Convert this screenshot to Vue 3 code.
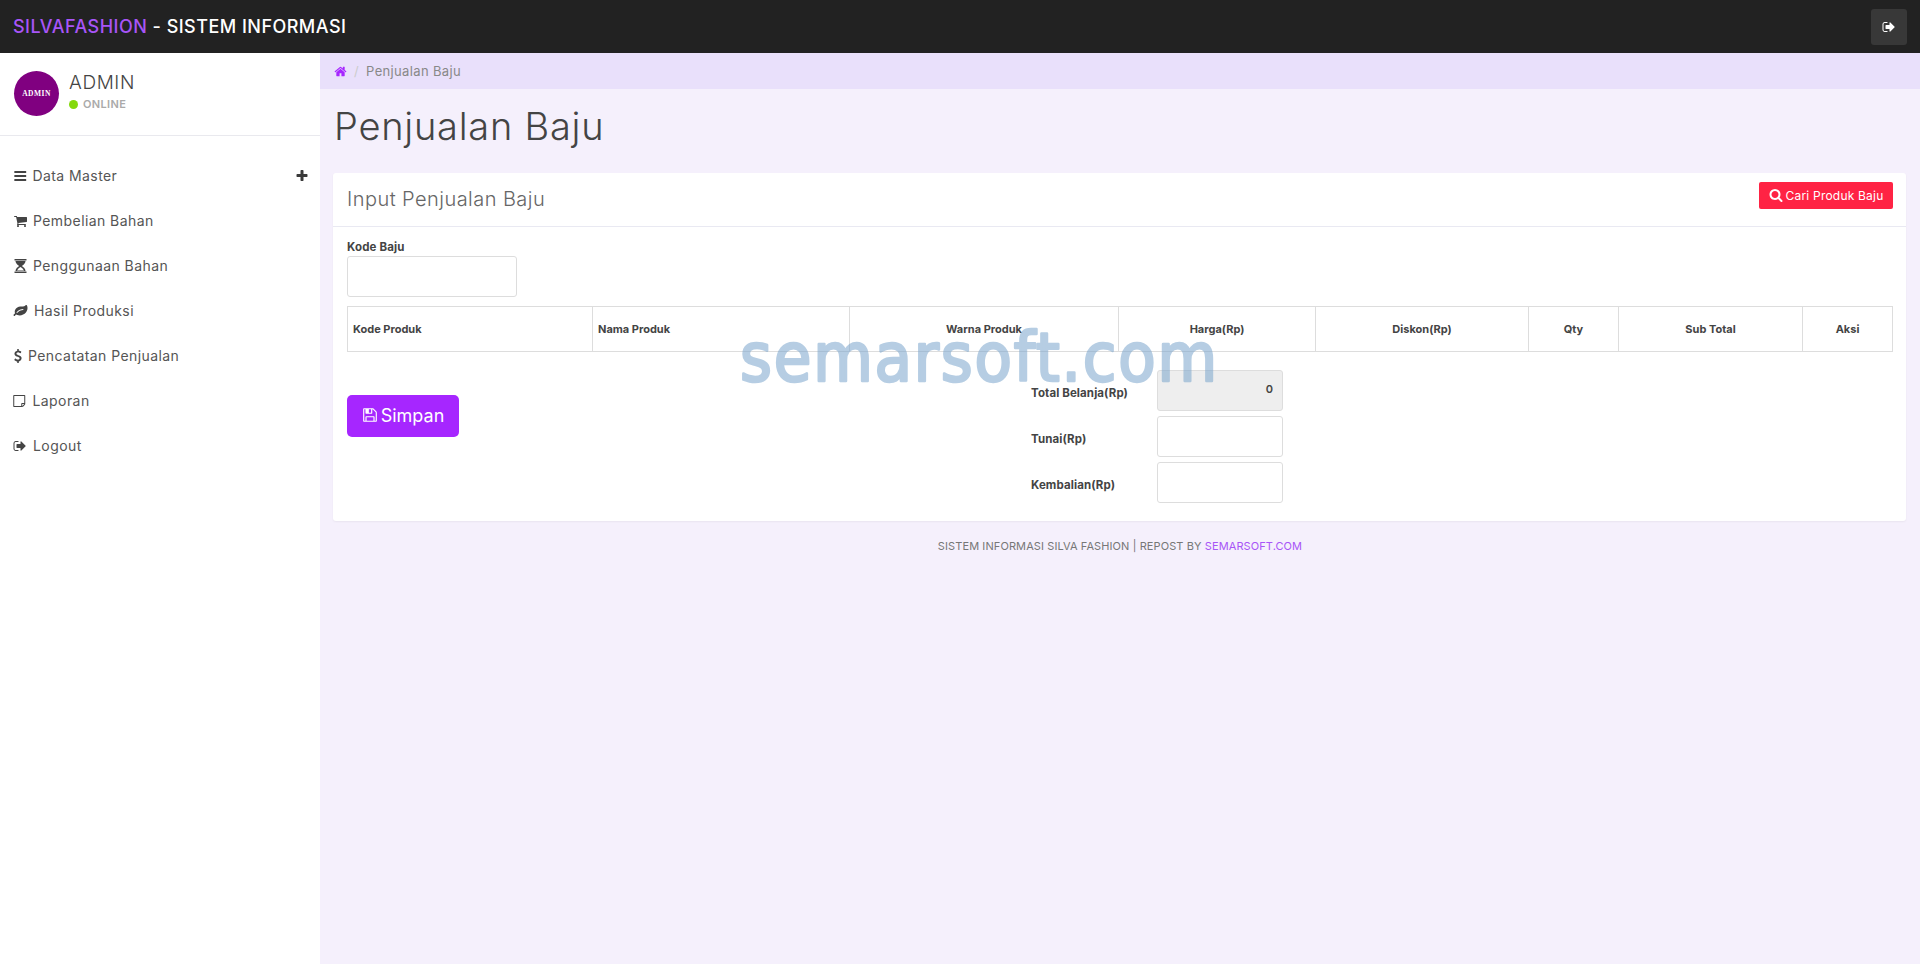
<template>
  <div class="page">
    <header class="topbar">
      <div class="brand"><span class="brand-name">SILVAFASHION</span> - SISTEM INFORMASI</div>
      <button class="top-logout">
        <svg class="icon" viewBox="0 0 1792 1792"><path :d="icons.signOut" /></svg>
      </button>
    </header>

    <div class="layout">
      <aside class="sidebar">
        <div class="user-box">
          <div class="avatar">ADMIN</div>
          <div>
            <div class="user-name">ADMIN</div>
            <div class="user-status"><span class="dot"></span>ONLINE</div>
          </div>
        </div>

        <nav class="menu">
          <a v-for="item in menu" :key="item.label" class="menu-item" href="#">
            <svg
              class="icon"
              :style="{ width: item.size + 'px', marginRight: (item.extra || 0) + 'px' }"
              :viewBox="item.box || '0 0 1792 1792'"
            ><path fill-rule="evenodd" :d="icons[item.icon]" /></svg>
            <span>{{ item.label }}</span>
            <svg v-if="item.sub" class="icon plus" viewBox="0 0 1792 1792"><path :d="icons.plus" /></svg>
          </a>
        </nav>
      </aside>

      <main class="content">
        <div class="breadcrumb">
          <svg class="icon home" viewBox="0 0 1792 1792"><path :d="icons.home" /></svg>
          <span class="sep">/</span>
          <span>Penjualan Baju</span>
        </div>

        <h1 class="page-title">Penjualan Baju</h1>

        <section class="card">
          <div class="card-header">
            <h2>Input Penjualan Baju</h2>
            <button class="search-button">
              <svg class="icon" viewBox="0 0 1792 1792"><path :d="icons.search" /></svg>
              Cari Produk Baju
            </button>
          </div>

          <div class="card-body">
            <label class="code-label">Kode Baju</label>
            <input class="code-input" type="text" />

            <table class="items">
              <colgroup>
                <col v-for="col in columns" :key="col.label" :style="{ width: col.width + 'px' }" />
              </colgroup>
              <thead>
                <tr>
                  <th v-for="col in columns" :key="col.label" :class="{ left: col.left }">{{ col.label }}</th>
                </tr>
              </thead>
            </table>

            <div class="bottom-row">
              <div>
                <button class="save-button">
                  <svg class="icon" viewBox="0 0 1792 1792"><path :d="icons.save" /></svg>
                  Simpan
                </button>
              </div>

              <div class="totals">
                <label>Total Belanja(Rp)</label>
                <input class="readonly" type="text" value="0" readonly />
                <label>Tunai(Rp)</label>
                <input type="text" />
                <label>Kembalian(Rp)</label>
                <input type="text" />
              </div>
            </div>
          </div>
        </section>

        <footer class="footer">
          SISTEM INFORMASI SILVA FASHION | REPOST BY <a href="#">SEMARSOFT.COM</a>
        </footer>
      </main>
    </div>

    <!-- watermark over the page, not part of the layout -->
    <svg class="watermark" width="530" height="90" viewBox="0 0 530 90">
      <text x="4" y="60">semarsoft.com</text>
    </svg>
  </div>
</template>

<script setup>
// Font Awesome 4 glyphs, 1792 grid
const icons = {
  bars: 'M1664 1344v128q0 26-19 45t-45 19h-1408q-26 0-45-19t-19-45v-128q0-26 19-45t45-19h1408q26 0 45 19t19 45zm0-512v128q0 26-19 45t-45 19h-1408q-26 0-45-19t-19-45v-128q0-26 19-45t45-19h1408q26 0 45 19t19 45zm0-512v128q0 26-19 45t-45 19h-1408q-26 0-45-19t-19-45v-128q0-26 19-45t45-19h1408q26 0 45 19t19 45z',
  cart: 'M704 1536q0 52-38 90t-90 38-90-38-38-90 38-90 90-38 90 38 38 90zm896 0q0 52-38 90t-90 38-90-38-38-90 38-90 90-38 90 38 38 90zm128-1088v512q0 24-16.5 42.5t-40.5 21.5l-1044 122q13 60 13 70 0 16-24 64h920q26 0 45 19t19 45-19 45-45 19h-1024q-26 0-45-19t-19-45q0-11 8-31.5t16-36 21.5-40 15.5-29.5l-177-823h-204q-26 0-45-19t-19-45 19-45 45-19h256q16 0 28.5 6.5t19.5 15.5 13 24.5 8 26 5.5 29.5 4.5 26h1201q26 0 45 19t19 45z',
  // same shape as fa-hourglass-start: sand on top, the lower half left open
  hourglass: 'M1632 1600q14 0 23 9t9 23v128q0 14-9 23t-23 9h-1472q-14 0-23-9t-9-23v-128q0-14 9-23t23-9h1472zm-1374-64q3-55 16-107t30-95 46-87 53.500-76 64.500-69.500 66-60 70.500-55 66.500-47.500 65-43q-43-28-65-43t-66.500-47.500-70.500-55-66-60-64.500-69.500-53.500-76-46-87-30-95-16-107h1276q-3 55-16 107t-30 95-46 87-53.500 76-64.500 69.500-66 60-70.500 55-66.500 47.500-65 43q43 28 65 43t66.500 47.500 70.500 55 66 60 64.500 69.500 53.500 76 46 87 30 95 16 107h-1276zm1374-1536q14 0 23 9t9 23v128q0 14-9 23t-23 9h-1472q-14 0-23-9t-9-23v-128q0-14 9-23t23-9h1472zM896 1010L1130 1190 1300 1400 1350 1470H442L492 1400 662 1190z',
  leaf: 'M1280 704q0-26-19-45t-45-19q-172 0-318 49.500t-259.500 134-235.500 219.500q-19 21-19 45 0 26 19 45t45 19q24 0 45-19 27-24 74-71t67-66q137-124 268.500-176t313.500-52q26 0 45-19t19-45zm512-198q0 95-20 193-46 224-184.500 383t-357.500 268q-214 108-438 108-148 0-286-47-15-5-88-42t-96-37q-16 0-39.500 32t-45 70-52.500 70-60 32q-30 0-51-11t-31-24-27-42q-2-4-6-11t-5.500-10-3-9.500-1.500-13.500q0-35 31-73.500t68-65.500 68-56 31-48q0-4-14-38t-16-44q-9-51-9-104 0-115 43.500-220t119-184.500 170.500-139 204-95.500q55-18 145-25.500t179.500-9 178.500-6 163.500-24 113.500-56.500l29.500-29.500 29.500-28 27-20 36.500-16 43.500-4.500q39 0 70.500 46t47.500 112 24 124 8 96z',
  dollar: 'M1362 1185q0 153-99.500 263.500t-258.500 136.500v175q0 14-9 23t-23 9h-135q-13 0-22.500-9.500t-9.500-22.500v-175q-66-9-127.500-31t-101.500-44.500-74-48-46.500-37.500-17.500-18q-17-21-2-41l103-135q7-10 23-12 15-2 24 9l2 2q113 99 243 125 37 8 74 8 81 0 142.500-43t61.500-122q0-28-15-53t-33.500-42-58.500-37.500-66-32-80-32.500q-39-16-61.500-25t-61.500-26.500-62.500-31-56.500-35.500-53.500-42.500-43.500-49-35.500-58-21-66.500-8.500-78q0-138 98-242t255-134v-180q0-13 9.500-22.500t22.500-9.500h135q14 0 23 9t9 23v176q57 6 110.500 23t87 33.500 63.500 37.500 39 29 15 14q17 18 5 38l-81 146q-8 15-23 16-14 3-27-7-3-3-14.500-12t-39-26.500-58.500-32-74.500-26-85.500-11.500q-95 0-155 43t-60 111q0 26 8.500 48t29.500 41.500 39.500 33 56 31 60.500 27 70 27.500q53 20 81 31.500t76 35 75.500 42.500 62 50 53 63.500 31.500 76.500 13 94z',
  note: 'M1400 1280h-248v248q29-10 41-22l185-185q12-12 22-41zm-280-128h288v-896h-1280v1280h896v-288q0-40 28-68t68-28zm416-928v1024q0 40-20 88t-48 76l-184 184q-28 28-76 48t-88 20h-1024q-40 0-68-28t-28-68v-1344q0-40 28-68t68-28h1344q40 0 68 28t28 68z',
  signOut: 'M704 1440q0 4 1 20t.5 26.500-3 23.500-10 19.500-20.500 6.500h-320q-119 0-203.500-84.500t-84.500-203.500v-704q0-119 84.500-203.500t203.500-84.500h320q13 0 22.500 9.500t9.500 22.500q0 4 1 20t.5 26.500-3 23.500-10 19.500-20.500 6.500h-320q-66 0-113 47t-47 113v704q0 66 47 113t113 47h312l11.500 1 11.500 3 8 5.500 7 9 2 13.500zm928-544q0 26-19 45l-544 544q-19 19-45 19t-45-19-19-45v-288h-448q-26 0-45-19t-19-45v-384q0-26 19-45t45-19h448v-288q0-26 19-45t45-19 45 19l544 544q19 19 19 45z',
  plus: 'M1600 736v192q0 40-28 68t-68 28h-416v416q0 40-28 68t-68 28h-192q-40 0-68-28t-28-68v-416h-416q-40 0-68-28t-28-68v-192q0-40 28-68t68-28h416v-416q0-40 28-68t68-28h192q40 0 68 28t28 68v416h416q40 0 68 28t28 68z',
  home: 'M1472 992v480q0 26-19 45t-45 19h-384v-384h-256v384h-384q-26 0-45-19t-19-45v-480q0-1 .5-3t.5-3l575-474 575 474q1 2 1 6zm223-69l-62 74q-8 9-21 11h-3q-13 0-21-7l-692-577-692 577q-12 8-24 7-13-2-21-11l-62-74q-8-10-7-23.500t11-21.500l719-599q32-26 76-26t76 26l244 204v-195q0-14 9-23t23-9h192q14 0 23 9t9 23v408l219 182q10 8 11 21.500t-7 23.500z',
  save: 'M512 1536h768v-384h-768v384zm896 0h128v-896q0-14-10-38.500t-20-34.500l-281-281q-10-10-34-20t-39-10v416q0 40-28 68t-68 28h-576q-40 0-68-28t-28-68v-416h-128v1280h128v-416q0-40 28-68t68-28h832q40 0 68 28t28 68v416zm-384-928v-320q0-13-9.500-22.500t-22.500-9.500h-192q-13 0-22.500 9.500t-9.500 22.500v320q0 13 9.500 22.500t22.500 9.500h192q13 0 22.500-9.500t9.500-22.500zm640 32v928q0 40-28 68t-68 28h-1344q-40 0-68-28t-28-68v-1344q0-40 28-68t68-28h928q40 0 88 20t76 48l280 280q28 28 48 76t20 88z',
  search: 'M1216 832q0-185-131.500-316.500t-316.500-131.500-316.500 131.500-131.500 316.500 131.500 316.500 316.500 131.500 316.500-131.500 131.500-316.500zm512 832q0 52-38 90t-90 38q-54 0-90-38l-343-342q-179 124-399 124-143 0-273.500-55.500t-225-150-150-225-55.500-273.500 55.500-273.500 150-225 225-150 273.500-55.500 273.500 55.500 225 150 150 225 55.500 273.500q0 220-124 399l343 343q37 37 37 90z',
}

const menu = [
  { label: 'Data Master', icon: 'bars', size: 14.5, sub: true },
  { label: 'Pembelian Bahan', icon: 'cart', size: 15 },
  { label: 'Penggunaan Bahan', icon: 'hourglass', size: 15 },
  { label: 'Hasil Produksi', icon: 'leaf', size: 15, extra: 1 },
  { label: 'Pencatatan Penjualan', icon: 'dollar', size: 9, box: '288 0 1104 1792', extra: 1 },
  { label: 'Laporan', icon: 'note', size: 14.5 },
  { label: 'Logout', icon: 'signOut', size: 14, extra: 1 },
]

const columns = [
  { label: 'Kode Produk', width: 245, left: true },
  { label: 'Nama Produk', width: 257, left: true },
  { label: 'Warna Produk', width: 269 },
  { label: 'Harga(Rp)', width: 197 },
  { label: 'Diskon(Rp)', width: 213 },
  { label: 'Qty', width: 90 },
  { label: 'Sub Total', width: 184 },
  { label: 'Aksi', width: 90 },
]
</script>

<style>
html,
body {
  margin: 0;
}
</style>

<style scoped>
.page {
  position: relative;
  height: 964px;
  overflow: hidden;
  display: flex;
  flex-direction: column;
  font-family: Inter, "Liberation Sans", sans-serif;
  color: #444;
}

.icon {
  width: 14px;
  height: 14px;
  fill: currentColor;
  flex-shrink: 0;
}

.topbar {
  height: 53px;
  padding: 0 13px;
  background: #222;
  display: flex;
  align-items: center;
  justify-content: space-between;
  box-sizing: border-box;
}

.brand {
  color: #fff;
  font-size: 18px;
  font-weight: 500;
  letter-spacing: 0.47px;
}

.brand-name {
  color: #a855f7;
}

.top-logout {
  width: 36px;
  height: 36px;
  border: none;
  border-radius: 3px;
  background: #383838;
  color: #fff;
  display: flex;
  align-items: center;
  justify-content: center;
  padding: 0;
}

.top-logout .icon {
  width: 14px;
  height: 14px;
}

.layout {
  flex: 1;
  display: flex;
  min-height: 0;
}

.sidebar {
  width: 320px;
  flex-shrink: 0;
  background: #fff;
}

.user-box {
  height: 83px;
  padding: 18px 14px 0;
  border-bottom: 1px solid #e9e9ee;
  display: flex;
  gap: 10px;
  box-sizing: border-box;
}

.avatar {
  width: 45px;
  height: 45px;
  border-radius: 50%;
  background: #800080;
  color: #fff;
  font-family: "Liberation Serif", serif;
  font-size: 7.5px;
  font-weight: 700;
  letter-spacing: 0.5px;
  display: flex;
  align-items: center;
  justify-content: center;
}

.user-name {
  font-size: 19px;
  font-weight: 300;
  line-height: 24px;
  letter-spacing: 0.6px;
  color: #444;
}

.user-status {
  margin-top: 2px;
  display: flex;
  align-items: center;
  gap: 5px;
  font-size: 11px;
  font-weight: 600;
  letter-spacing: 0.35px;
  color: #aaa;
}

.dot {
  width: 9px;
  height: 9px;
  border-radius: 50%;
  background: #84d90d;
}

.menu {
  padding-top: 17px;
  display: flex;
  flex-direction: column;
}

.menu-item {
  height: 45px;
  padding: 0 13px;
  display: flex;
  align-items: center;
  gap: 5px;
  font-size: 14px;
  letter-spacing: 0.42px;
  color: #555;
  text-decoration: none;
}

.menu-item .icon {
  color: #444;
}

.menu-item .plus {
  width: 14px;
  height: 14px;
  margin-left: auto;
  margin-right: -2px;
  color: #3a3a3a;
}

.content {
  flex: 1;
  min-width: 0;
  background: #f5f0fc;
}

.breadcrumb {
  height: 36px;
  padding: 0 14px;
  background: #e9e0fb;
  display: flex;
  align-items: center;
  gap: 6px;
  font-size: 13px;
  letter-spacing: 0.35px;
  color: #888;
}

.home {
  width: 13px;
  height: 13px;
  color: #a626ff;
}

.sep {
  color: #ccc;
  margin: 0 1px;
}

.page-title {
  margin: 0 0 16px;
  padding: 15px 14px 0;
  height: 68px;
  box-sizing: border-box;
  font-size: 38px;
  line-height: 44px;
  font-weight: 300;
  letter-spacing: 0.75px;
  color: #444;
}

.card {
  margin: 0 14px 0 13px;
  background: #fff;
  border-radius: 3px;
  box-shadow: 0 1px 2px rgba(0, 0, 0, 0.05);
}

.card-header {
  height: 54px;
  padding: 0 13px 0 14px;
  border-bottom: 1px solid #e9e9f2;
  display: flex;
  align-items: center;
  justify-content: space-between;
  box-sizing: border-box;
}

.card-header h2 {
  margin: 0 0 2px;
  font-size: 20px;
  font-weight: 300;
  letter-spacing: 0.45px;
  color: #666;
}

.search-button {
  width: 134px;
  height: 27px;
  margin-top: -9px;
  padding: 0;
  border: none;
  border-radius: 2px;
  background: #ff2344;
  color: #fff;
  font-family: inherit;
  font-size: 12px;
  letter-spacing: 0.2px;
  display: flex;
  align-items: center;
  justify-content: center;
  gap: 3px;
}

.search-button .icon {
  width: 14px;
  height: 14px;
}

.card-body {
  padding: 11px 13px 18px 14px;
}

.code-label {
  display: block;
  height: 16px;
  margin-bottom: 2px;
  font-size: 11.5px;
  line-height: 19px;
  font-weight: 700;
  letter-spacing: 0.15px;
  color: #444;
}

input {
  display: block;
  height: 41px;
  padding: 0 9px;
  border: 1px solid #ddd;
  border-radius: 3px;
  background: #fff;
  box-sizing: border-box;
  font-family: inherit;
  font-size: 11px;
  font-weight: 600;
  color: #444;
}

.code-input {
  width: 170px;
}

.items {
  width: 1545px;
  height: 46px;
  margin-top: 9px;
  border-collapse: collapse;
  table-layout: fixed;
}

.items th {
  padding: 5px;
  border: 1px solid #ddd;
  font-size: 11px;
  font-weight: 700;
  text-align: center;
  color: #444;
}

.items th.left {
  text-align: left;
}

.bottom-row {
  display: flex;
  margin-top: 18px;
}

.bottom-row > div:first-child {
  width: 684px;
  padding-top: 25px;
}

.save-button {
  width: 112px;
  height: 42px;
  padding: 0 0 2px;
  border: none;
  border-radius: 5px;
  background: #a626ff;
  color: #fff;
  font-family: inherit;
  font-size: 18px;
  display: flex;
  align-items: center;
  justify-content: center;
  gap: 3px;
}

.save-button .icon {
  width: 16px;
  height: 16px;
}

.totals {
  display: grid;
  grid-template-columns: 126px 126px;
  row-gap: 5px;
  align-items: center;
  font-size: 11.5px;
  font-weight: 700;
  letter-spacing: 0.1px;
  color: #444;
}

.totals label {
  padding-top: 4px;
}

.totals input {
  width: 126px;
}

.readonly {
  background: #eee;
  text-align: right;
  padding-bottom: 4px;
}

.footer {
  margin-top: 18px;
  text-align: center;
  font-size: 11px;
  letter-spacing: 0.1px;
  color: #777;
}

.footer a {
  color: #a855f7;
  text-decoration: none;
}

.watermark {
  position: absolute;
  left: 736px;
  top: 321px;
  opacity: 0.55;
  pointer-events: none;
}

.watermark text {
  font-family: "DejaVu Sans", sans-serif;
  font-stretch: condensed;
  font-size: 68px;
  letter-spacing: 1.8px;
  fill: #7ba6cd;
  stroke: #7ba6cd;
  stroke-width: 2.5px;
  stroke-linejoin: round;
  stroke-linecap: round;
}
</style>
